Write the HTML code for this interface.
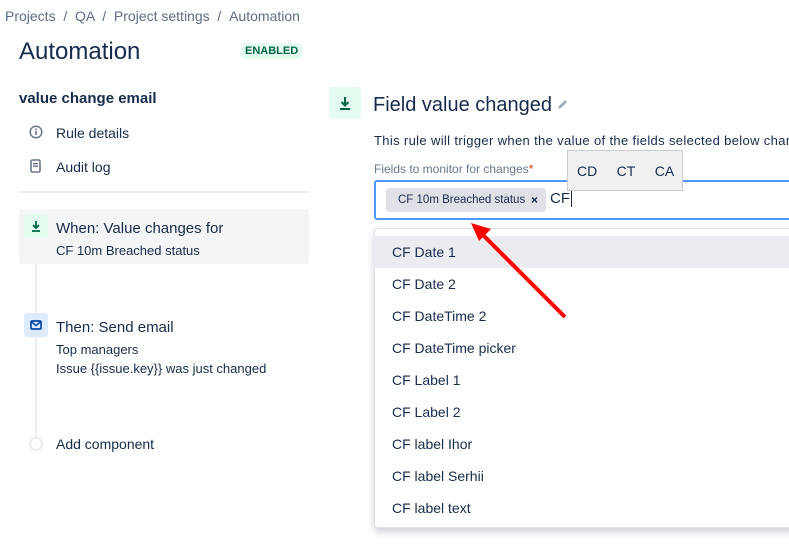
<!DOCTYPE html>
<html><head><style>
*{margin:0;padding:0;box-sizing:border-box}
body{width:789px;height:558px;overflow:hidden;background:#fff;font-family:"Liberation Sans",sans-serif;color:#172b4d;position:relative}
.a{position:absolute;white-space:nowrap}
.bc{color:#5e6c84;font-size:14px;top:8px}
.item{position:absolute;left:374px;width:420px;height:32px;font-size:14px;line-height:32px;padding-left:18px;color:#172b4d}
</style></head><body>
<div class="a bc" style="left:5px">Projects &nbsp;/ &nbsp;QA &nbsp;/ &nbsp;Project settings &nbsp;/ &nbsp;Automation</div>
<div class="a" style="left:19px;top:38px;font-size:24px;color:#172b4d">Automation</div>
<div class="a" style="left:241px;top:43px;background:#e3fcef;color:#006644;font-size:11px;font-weight:bold;padding:2px 4px;border-radius:3px">ENABLED</div>
<div class="a" style="left:19px;top:90px;font-size:15px;font-weight:bold">value change email</div>
<svg class="a" style="left:29px;top:125px" width="14" height="14"><circle cx="7" cy="7" r="5.8" fill="none" stroke="#6b778c" stroke-width="1.5"/><rect x="6.2" y="6" width="1.6" height="4" fill="#6b778c"/><rect x="6.2" y="3.5" width="1.6" height="1.6" fill="#6b778c"/></svg>
<div class="a" style="left:56px;top:125px;font-size:14px">Rule details</div>
<svg class="a" style="left:30px;top:159px" width="12" height="14"><rect x="1" y="1" width="9" height="12" rx="1.5" fill="none" stroke="#6b778c" stroke-width="1.6"/><rect x="3" y="4" width="5" height="1.4" fill="#6b778c"/><rect x="3" y="6.5" width="5" height="1.4" fill="#6b778c"/></svg>
<div class="a" style="left:56px;top:159px;font-size:14px">Audit log</div>
<div class="a" style="left:19px;top:191px;width:290px;height:2px;background:#ebecf0"></div>
<div class="a" style="left:35px;top:230px;width:2px;height:210px;background:#ebecf0"></div>
<div class="a" style="left:19px;top:209px;width:290px;height:55px;background:#f4f5f7;border-radius:3px"></div>
<div class="a" style="left:24px;top:214px;width:24px;height:24px;background:#e3fcef;border-radius:3px"></div>
<svg class="a" style="left:24px;top:214px" width="24" height="24"><path d="M12 7v7M9 11l3 3 3-3M8 17h8" stroke="#006644" stroke-width="1.8" fill="none"/></svg>
<div class="a" style="left:56px;top:220px;font-size:15px">When: Value changes for</div>
<div class="a" style="left:56px;top:243px;font-size:13px">CF 10m Breached status</div>
<div class="a" style="left:24px;top:313px;width:24px;height:24px;background:#deebff;border-radius:3px"></div>
<svg class="a" style="left:24px;top:313px" width="24" height="24"><rect x="7" y="8" width="10" height="8" rx="1" fill="none" stroke="#0747a6" stroke-width="1.7"/><path d="M7.5 9l4.5 3.5 4.5-3.5" stroke="#0747a6" stroke-width="1.5" fill="none"/></svg>
<div class="a" style="left:56px;top:319px;font-size:15px">Then: Send email</div>
<div class="a" style="left:56px;top:342px;font-size:13px">Top managers</div>
<div class="a" style="left:56px;top:361px;font-size:13px">Issue {{issue.key}} was just changed</div>
<div class="a" style="left:29px;top:437px;width:14px;height:14px;border-radius:50%;border:2px solid #ebecf0;background:#fff"></div>
<div class="a" style="left:56px;top:436px;font-size:14px">Add component</div>

<div class="a" style="left:329px;top:87px;width:32px;height:32px;background:#e3fcef;border-radius:3px"></div>
<svg class="a" style="left:329px;top:87px" width="32" height="32"><path d="M16 10v8M12.5 15l3.5 3.5 3.5-3.5M11 22h10" stroke="#006644" stroke-width="2" fill="none"/></svg>
<div class="a" style="left:373px;top:94px;font-size:20px">Field value changed</div>
<svg class="a" style="left:556px;top:97px" width="14" height="14"><path d="M2 12l1-3 6-6 2 2-6 6z" fill="#a5adba"/></svg>
<div class="a" style="left:374px;top:133px;font-size:13px;letter-spacing:0.35px">This rule will trigger when the value of the fields selected below changes.</div>
<div class="a" style="left:374px;top:162px;font-size:12px;color:#6b778c">Fields to monitor for changes<span style="color:#de350b">*</span></div>
<div class="a" style="left:374px;top:180px;width:430px;height:40px;border:2px solid #4c9aff;border-radius:3px;background:#fff"></div>
<div class="a" style="left:386px;top:188px;width:160px;height:24px;background:#dfe1e6;border-radius:3px;font-size:11.5px;line-height:24px;padding-left:12px">CF 10m Breached status</div>
<div class="a" style="left:531px;top:193px;font-size:12px;font-weight:bold">×</div>
<div class="a" style="left:550px;top:190px;font-size:15px">CF<span style="border-left:1px solid #172b4d;margin-left:1px"></span></div>
<div class="a" style="left:567px;top:150px;width:116px;height:41px;background:#f0f0f0;border:1px solid #ccc;font-size:14px;line-height:40px;padding-left:9px">CD&nbsp;&nbsp;&nbsp;&nbsp;&nbsp;CT&nbsp;&nbsp;&nbsp;&nbsp;&nbsp;CA</div>

<div class="a" style="left:374px;top:228px;width:430px;height:300px;border:1px solid #dfe1e6;border-radius:4px;box-shadow:0 4px 8px rgba(9,30,66,.2);background:#fff"></div>
<div class="item" style="top:236px;background:#ebecf0">CF Date 1</div>
<div class="item" style="top:268px">CF Date 2</div>
<div class="item" style="top:300px">CF DateTime 2</div>
<div class="item" style="top:332px">CF DateTime picker</div>
<div class="item" style="top:364px">CF Label 1</div>
<div class="item" style="top:396px">CF Label 2</div>
<div class="item" style="top:428px">CF label Ihor</div>
<div class="item" style="top:460px">CF label Serhii</div>
<div class="item" style="top:492px">CF label text</div>

<svg class="a" style="left:0;top:0" width="789" height="558"><path d="M565 317L483 235" stroke="#f00" stroke-width="4" fill="none"/><path d="M471 223l20 6-12 12z" fill="#f00"/></svg>
</body></html>
